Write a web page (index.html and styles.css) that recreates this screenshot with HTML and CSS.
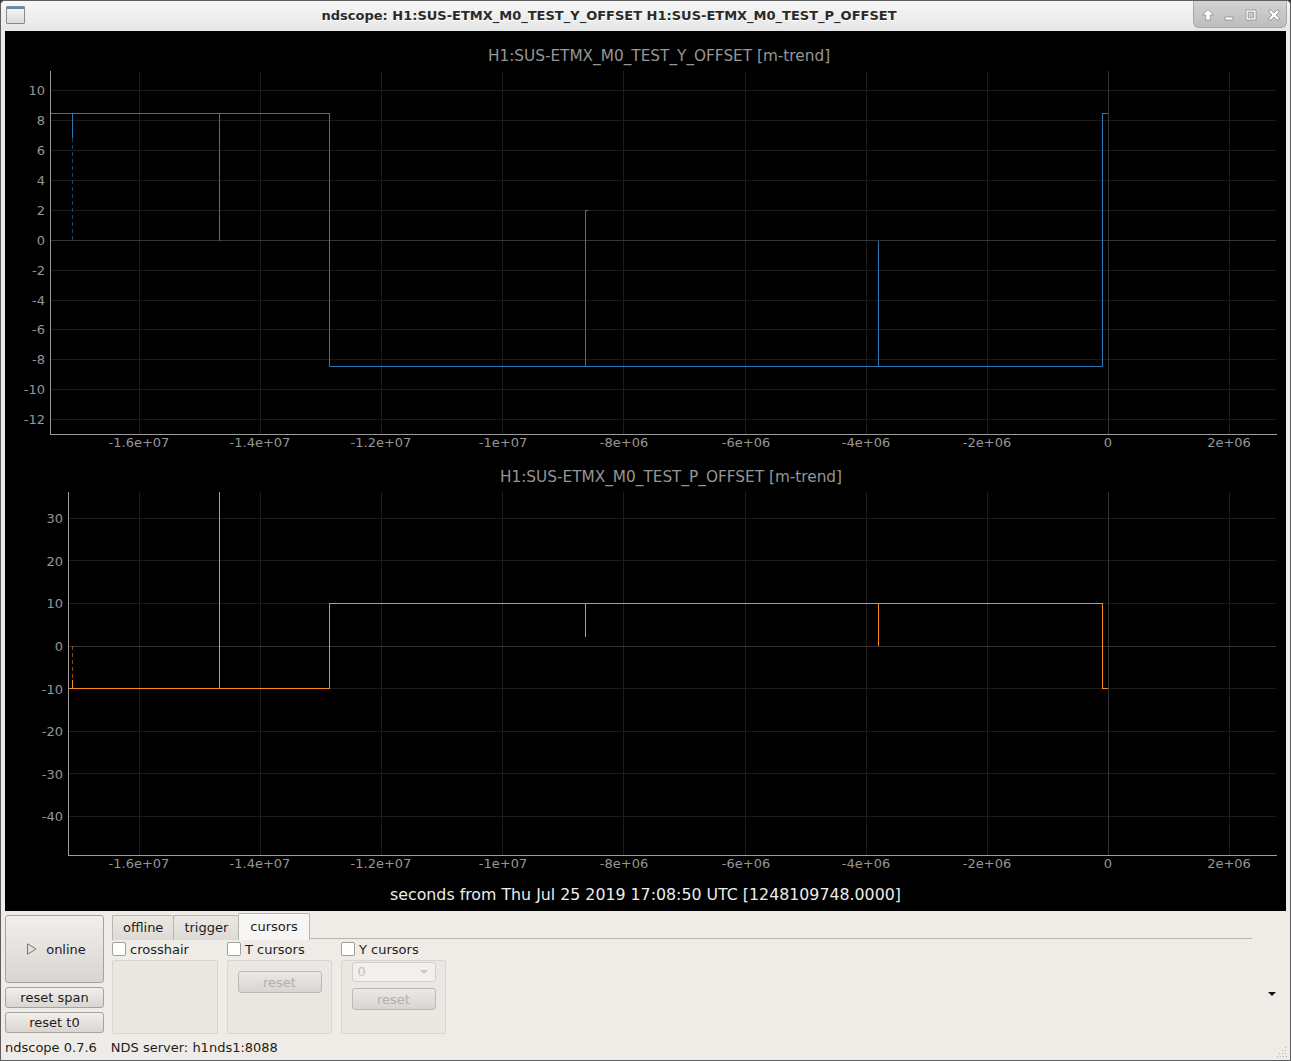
FILE: index.html
```html
<!DOCTYPE html>
<html lang="en">
<head>
    <meta charset="UTF-8">
    <title>ndscope</title>
    <link rel="stylesheet" href="styles.css">
</head>
<body>
<div class="window">
    <div class="titlebar">
        <div class="app-icon"></div>
        <div class="title">ndscope: H1:SUS-ETMX_M0_TEST_Y_OFFSET H1:SUS-ETMX_M0_TEST_P_OFFSET</div>
        <div class="wm-buttons">
            <svg width="92" height="26" viewBox="0 0 92 26">
                <g class="wm-icon">
                    <path d="M14 8.5 L19.5 14 L16.3 14 L16.3 19 L11.7 19 L11.7 14 L8.5 14 Z"/>
                    <rect x="31" y="16" width="8" height="3"/>
                    <path fill-rule="evenodd" d="M52 9 H62 V19 H52 Z M54.2 11.2 V16.8 H59.8 V11.2 Z"/>
                    <path d="M75 9 L77 9 L80 12 L83 9 L85 9 L85 11 L82 14 L85 17 L85 19 L83 19 L80 16 L77 19 L75 19 L75 17 L78 14 L75 11 Z"/>
                </g>
            </svg>
        </div>
    </div>

    <div class="client">
        <div class="scope">
            <!-- top plot -->
            <svg class="plot" width="1281" height="421" viewBox="5 31 1281 421">
                <text class="plot-title" x="659" y="61">H1:SUS-ETMX_M0_TEST_Y_OFFSET [m-trend]</text>
                <g class="grid">
                    <path d="M139.5 71V434 M260.5 71V434 M381.5 71V434 M502.5 71V434 M623.5 71V434 M745.5 71V434 M866.5 71V434 M987.5 71V434 M1229.5 71V434"/>
                    <path d="M51 90.5H1276 M51 120.5H1276 M51 150.5H1276 M51 180.5H1276 M51 210.5H1276 M51 270.5H1276 M51 300.5H1276 M51 329.5H1276 M51 359.5H1276 M51 389.5H1276 M51 419.5H1276"/>
                </g>
                <path class="zero" d="M1108.5 71V434 M51 240.5H1276"/>
                <path class="axis" d="M50.5 71V434.5H1277"/>
                <g class="yticks">
                    <text x="45" y="95">10</text>
                    <text x="45" y="125">8</text>
                    <text x="45" y="155">6</text>
                    <text x="45" y="185">4</text>
                    <text x="45" y="215">2</text>
                    <text x="45" y="245">0</text>
                    <text x="45" y="275">-2</text>
                    <text x="45" y="305">-4</text>
                    <text x="45" y="334">-6</text>
                    <text x="45" y="364">-8</text>
                    <text x="45" y="394">-10</text>
                    <text x="45" y="424">-12</text>
                </g>
                <g class="xticks">
                    <text x="139" y="447">-1.6e+07</text>
                    <text x="260" y="447">-1.4e+07</text>
                    <text x="381" y="447">-1.2e+07</text>
                    <text x="503" y="447">-1e+07</text>
                    <text x="624" y="447">-8e+06</text>
                    <text x="746" y="447">-6e+06</text>
                    <text x="866" y="447">-4e+06</text>
                    <text x="987" y="447">-2e+06</text>
                    <text x="1108" y="447">0</text>
                    <text x="1229" y="447">2e+06</text>
                </g>
                <g class="trace trace-y">
                    <path d="M51 113.5H329.5V366.5H1102.5V113.5H1108"/>
                    <path d="M72.5 113.5V138 M219.5 113.5V240.5 M585.5 366.5V210.5H588 M878.5 366.5V240.5"/>
                    <path class="dashed" d="M72.5 138V240"/>
                </g>
            </svg>

            <!-- bottom plot -->
            <svg class="plot" width="1281" height="428" viewBox="5 452 1281 428">
                <text class="plot-title" x="671" y="482">H1:SUS-ETMX_M0_TEST_P_OFFSET [m-trend]</text>
                <g class="grid">
                    <path d="M139.5 492V855 M260.5 492V855 M381.5 492V855 M502.5 492V855 M623.5 492V855 M745.5 492V855 M866.5 492V855 M987.5 492V855 M1229.5 492V855"/>
                    <path d="M69 518.5H1276 M69 560.5H1276 M69 603.5H1276 M69 688.5H1276 M69 731.5H1276 M69 773.5H1276 M69 816.5H1276"/>
                </g>
                <path class="zero" d="M1108.5 492V855 M69 646.5H1276"/>
                <path class="axis" d="M68.5 492V855.5H1277"/>
                <g class="yticks">
                    <text x="63" y="523">30</text>
                    <text x="63" y="566">20</text>
                    <text x="63" y="608">10</text>
                    <text x="63" y="651">0</text>
                    <text x="63" y="694">-10</text>
                    <text x="63" y="736">-20</text>
                    <text x="63" y="779">-30</text>
                    <text x="63" y="821">-40</text>
                </g>
                <g class="xticks">
                    <text x="139" y="868">-1.6e+07</text>
                    <text x="260" y="868">-1.4e+07</text>
                    <text x="381" y="868">-1.2e+07</text>
                    <text x="503" y="868">-1e+07</text>
                    <text x="624" y="868">-8e+06</text>
                    <text x="746" y="868">-6e+06</text>
                    <text x="866" y="868">-4e+06</text>
                    <text x="987" y="868">-2e+06</text>
                    <text x="1108" y="868">0</text>
                    <text x="1229" y="868">2e+06</text>
                </g>
                <g class="trace trace-p">
                    <path d="M69 688.5H329.5V603.5H1102.5V688.5H1108"/>
                    <path d="M72.5 680V688.5 M219.5 688.5V492 M585.5 603.5V637 M878.5 603.5V646"/>
                    <path class="dashed" d="M72.5 646V680"/>
                </g>
            </svg>

            <div class="xlabel">seconds from Thu Jul 25 2019 17:08:50 UTC [1248109748.0000]</div>
        </div>

        <div class="controls">
            <div class="left-buttons">
                <button class="btn btn-online">
                    <svg width="10" height="12" viewBox="0 0 10 12"><path d="M0.5 0.8 L9 6 L0.5 11.2 Z"/></svg>
                    online
                </button>
                <button class="btn">reset span</button>
                <button class="btn">reset t0</button>
            </div>

            <div class="tabs">
                <div class="tab-bar">
                    <span class="tab">offline</span>
                    <span class="tab">trigger</span>
                    <span class="tab active">cursors</span>
                    <span class="tab-fill"></span>
                </div>
                <div class="tab-page">
                    <div class="cursor-col">
                        <label class="check"><span class="box"></span>crosshair</label>
                        <div class="group"></div>
                    </div>
                    <div class="cursor-col">
                        <label class="check"><span class="box"></span>T cursors</label>
                        <div class="group group-t">
                            <button class="btn btn-disabled">reset</button>
                        </div>
                    </div>
                    <div class="cursor-col">
                        <label class="check"><span class="box"></span>Y cursors</label>
                        <div class="group group-y">
                            <div class="combo">0<span class="combo-arrow"></span></div>
                            <button class="btn btn-disabled">reset</button>
                        </div>
                    </div>
                </div>
            </div>

            <div class="more-arrow"></div>
        </div>

        <div class="status">
            <span>ndscope 0.7.6</span>
            <span class="server">NDS server: h1nds1:8088</span>
        </div>
        <svg class="grip" width="10" height="10" viewBox="0 0 10 10">
            <g fill="#b4b0ac">
                <rect x="8" y="0" width="1" height="1"/>
                <rect x="5" y="3" width="1" height="1"/><rect x="8" y="3" width="1" height="1"/>
                <rect x="2" y="6" width="1" height="1"/><rect x="5" y="6" width="1" height="1"/><rect x="8" y="6" width="1" height="1"/>
                <rect x="0" y="9" width="1" height="1"/><rect x="3" y="9" width="1" height="1"/><rect x="6" y="9" width="1" height="1"/><rect x="9" y="9" width="1" height="1"/>
            </g>
        </svg>
    </div>
</div>
</body>
</html>
```

FILE: styles.css
```css
body {
    margin: 0;
    background: #3a3a3a;
    font-family: "DejaVu Sans", sans-serif;
    font-size: 13px;
    color: #1c1c1c;
}
.window {
    position: relative;
    width: 1291px;
    height: 1061px;
    box-sizing: border-box;
    border: 1px solid #5e5e5e;
    border-radius: 5px 5px 0 0;
    background: #efece8;
    overflow: hidden;
}

/* title bar */
.titlebar {
    height: 30px;
    display: flex;
    align-items: flex-start;
    background: linear-gradient(#f7f7f7, #e6e6e6);
}
.app-icon {
    width: 17px;
    height: 16px;
    margin: 5px 0 0 5px;
    border: 1px solid #8a8a8a;
    border-radius: 1px;
    background: linear-gradient(#5b86c2 0, #5b86c2 2px, #f1f1f1 2px, #f1f1f1 3px, #dcdcdc);
}
.title {
    flex: 1;
    text-align: center;
    font-weight: bold;
    font-size: 13px;
    line-height: 29px;
    color: #2a2a2a;
    text-shadow: 0 1px 0 #ffffff;
}
.wm-buttons {
    width: 92px;
    height: 26px;
    margin-right: 3px;
    border: 1px solid #a8a8a8;
    border-top: none;
    border-radius: 0 0 6px 6px;
    background: linear-gradient(#d2d2d2, #bdbdbd);
}
.wm-buttons svg {
    display: block;
}
.wm-icon {
    fill: #ffffff;
    stroke: #8c8c8c;
    stroke-width: 0.8;
}

/* plot area */
.client {
    padding: 0 4px;
}
.scope {
    background: #000000;
    height: 880px;
    display: flex;
    flex-direction: column;
}
.plot {
    display: block;
    shape-rendering: crispEdges;
}
.plot text {
    font-family: "DejaVu Sans", sans-serif;
    fill: #969696;
}
.plot-title {
    font-size: 15.3px;
    text-anchor: middle;
}
.yticks text {
    font-size: 13px;
    text-anchor: end;
}
.xticks text {
    font-size: 13px;
    text-anchor: middle;
}
.grid path {
    stroke: #1c1c1c;
    fill: none;
}
.zero {
    stroke: #343434;
    fill: none;
}
.axis {
    stroke: #9c9c9c;
    fill: none;
}
.trace path {
    fill: none;
    stroke-width: 1.3;
}
.trace-y path {
    stroke: #2a7ab8;
}
.trace-p path {
    stroke: #ff8a1c;
}
.trace path.dashed {
    stroke-dasharray: 4 3;
    opacity: 0.55;
}
.xlabel {
    flex: 1;
    text-align: center;
    font-size: 15.8px;
    line-height: 30px;
    color: #ececec;
}

/* controls */
.controls {
    display: grid;
    grid-template-columns: 99px 1140px 1fr;
    column-gap: 8px;
    padding-top: 4px;
    height: 118px;
}
.left-buttons {
    display: flex;
    flex-direction: column;
    gap: 4px;
}
.btn {
    font-family: "DejaVu Sans", sans-serif;
    font-size: 13px;
    color: #1c1c1c;
    height: 21px;
    padding: 0;
    border: 1px solid #a6a39f;
    border-radius: 3px;
    background: linear-gradient(#f1efec, #d9d5d1);
}
.btn-online {
    height: 68px;
    display: flex;
    align-items: center;
    justify-content: center;
    gap: 9px;
    padding-left: 4px;
}
.btn-online svg path {
    fill: none;
    stroke: #777777;
}
.tabs {
    display: flex;
    flex-direction: column;
    margin-top: -1px;
}
.tab-bar {
    display: flex;
    align-items: flex-end;
    height: 26px;
}
.tab {
    height: 24px;
    line-height: 24px;
    padding: 0 10px;
    border: 1px solid #b9b5b1;
    border-bottom: none;
    border-right: none;
    border-radius: 2px 2px 0 0;
    background: linear-gradient(#ebe8e4, #dedad6);
}
.tab.active {
    height: 26px;
    line-height: 25px;
    padding: 0 11px;
    border-right: 1px solid #b9b5b1;
    background: #f7f6f4;
}
.tab-fill {
    flex: 1;
    border-bottom: 1px solid #bab6b2;
    margin-bottom: 1px;
}
.tab-page {
    display: flex;
    gap: 9px;
    padding-top: 1px;
}
.cursor-col {
    width: 105px;
    display: flex;
    flex-direction: column;
    gap: 3px;
}
.cursor-col:first-child {
    width: 106px;
}
.check {
    display: flex;
    align-items: center;
    gap: 4px;
    height: 16px;
}
.box {
    width: 12px;
    height: 12px;
    border: 1px solid #a3a09c;
    border-radius: 2px;
    background: #ffffff;
}
.group {
    height: 72px;
    border: 1px solid #d9d5d1;
    border-radius: 2px;
    background: #ebe8e4;
    display: flex;
    flex-direction: column;
    align-items: center;
}
.group-t {
    padding-top: 10px;
    height: 62px;
}
.group-y {
    padding-top: 1px;
    gap: 6px;
    height: 71px;
}
.btn-disabled {
    width: 84px;
    height: 22px;
    color: #b3afab;
    border-color: #bcb9b5;
    background: linear-gradient(#ebe9e6, #d8d5d1);
}
.combo {
    position: relative;
    box-sizing: border-box;
    width: 84px;
    height: 20px;
    line-height: 18px;
    padding-left: 5px;
    color: #c4c0bc;
    border: 1px solid #d3cfcb;
    border-radius: 3px;
    background: #f2f0ed;
}
.combo-arrow {
    position: absolute;
    right: 7px;
    top: 7px;
    border: 4px solid transparent;
    border-top: 4px solid #c8c4c0;
}
.more-arrow {
    align-self: start;
    margin-top: 77px;
    margin-left: 8px;
    width: 0;
    height: 0;
    border-left: 4px solid transparent;
    border-right: 4px solid transparent;
    border-top: 4px solid #111111;
}
.status {
    display: flex;
    gap: 14px;
    height: 24px;
    align-items: center;
    padding-top: 2px;
}
.grip {
    position: absolute;
    right: 3px;
    bottom: 3px;
}
```
